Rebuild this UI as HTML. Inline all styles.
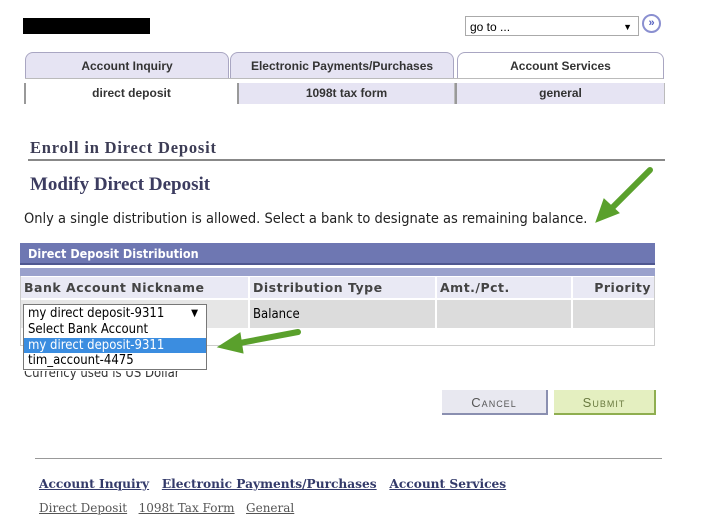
<!DOCTYPE html>
<html><head><style>
body{margin:0;width:720px;height:529px;background:#fff;position:relative;overflow:hidden;font-family:"DejaVu Sans","Liberation Sans",sans-serif}
.a{position:absolute}
.tab{position:absolute;top:52px;height:26px;background:#e6e4f3;border:1px solid #a9a6c2;border-bottom:none;border-radius:8px 8px 0 0;font:bold 12px "Liberation Sans",sans-serif;color:#333;text-align:center;line-height:26px}
.sub{position:absolute;top:83px;height:21px;background:#e6e4f3;border-left:2px solid #999;border-right:1px solid #bbb;font:bold 12px "Liberation Sans",sans-serif;color:#333;text-align:center;line-height:20px}
.th{position:absolute;top:277px;height:21px;background:#e9e9f4;font:bold 12.5px "DejaVu Sans",sans-serif;color:#444;line-height:21px;letter-spacing:.5px}
.td{position:absolute;top:300px;height:28px;background:#dcdcdc}
.btn{position:absolute;top:390px;height:25px;font:13px "Liberation Sans",sans-serif;letter-spacing:1px;text-align:center;line-height:25px;color:#555;font-variant:small-caps}
.ft a{color:#333a6a;text-decoration:underline;font-family:"DejaVu Serif",serif}
</style></head><body>
<div class="a" style="left:23px;top:18px;width:127px;height:16px;background:#000"></div>
<div class="a" style="left:465px;top:16px;width:174px;height:20px;border:1px solid #aaa;font:12px 'Liberation Sans',sans-serif;line-height:20px;padding-left:4px;box-sizing:border-box">go to ...<span style="position:absolute;right:6px;font-size:9px">▼</span></div>
<div class="a" style="left:642px;top:14px;width:19px;height:19px;border:2px solid #8a8fd0;border-radius:50%;box-sizing:border-box;font:bold 11px sans-serif;color:#5560c0;text-align:center;line-height:15px">»</div>
<div class="tab" style="left:25px;width:202px">Account Inquiry</div>
<div class="tab" style="left:230px;width:222px">Electronic Payments/Purchases</div>
<div class="tab" style="left:457px;width:205px;background:#fff">Account Services</div>
<div class="a" style="left:25px;top:78px;width:638px;height:1px;background:#bbb"></div>
<div class="sub" style="left:24px;width:211px;background:#fff">direct deposit</div>
<div class="sub" style="left:237px;width:215px">1098t tax form</div>
<div class="sub" style="left:455px;width:207px">general</div>
<div class="a" style="left:30px;top:138px;font:bold 16.5px 'Liberation Serif',serif;color:#3c3c55;letter-spacing:.8px">Enroll in Direct Deposit</div>
<div class="a" style="left:28px;top:159px;width:637px;height:2px;background:#888"></div>
<div class="a" style="left:30px;top:174px;font:bold 19px 'Liberation Serif',serif;color:#3c3c60">Modify Direct Deposit</div>
<div class="a" style="left:24px;top:211px;font:14.5px 'DejaVu Sans Condensed','DejaVu Sans',sans-serif;color:#222">Only a single distribution is allowed. Select a bank to designate as remaining balance.</div>
<div class="a" style="left:20px;top:243px;width:635px;height:22px;background:#6e77b2;border-bottom:2px solid #4f5790;font:bold 12.5px 'DejaVu Sans Condensed','DejaVu Sans',sans-serif;color:#fff;line-height:22px;padding-left:8px;box-sizing:border-box">Direct Deposit Distribution</div>
<div class="a" style="left:20px;top:268px;width:635px;height:78px;border:1px solid #ccc;box-sizing:border-box"></div>
<div class="a" style="left:20px;top:268px;width:635px;height:8px;background:#9aa1cc"></div>
<div class="th" style="left:21px;width:227px;padding-left:3px;box-sizing:border-box">Bank Account Nickname</div>
<div class="th" style="left:250px;width:185px;padding-left:3px;box-sizing:border-box">Distribution Type</div>
<div class="th" style="left:437px;width:134px;padding-left:3px;box-sizing:border-box">Amt./Pct.</div>
<div class="th" style="left:573px;width:81px;text-align:right;padding-right:3px;box-sizing:border-box">Priority</div>
<div class="td" style="left:21px;width:227px;background:#e6e6e6"></div>
<div class="td" style="left:250px;width:185px;font:13px 'DejaVu Sans Condensed',sans-serif;line-height:30px;padding-left:3px;box-sizing:border-box">Balance</div>
<div class="td" style="left:437px;width:134px"></div>
<div class="td" style="left:573px;width:81px"></div>
<div class="a" style="left:23px;top:304px;width:184px;height:19px;border:1px solid #777;background:#fff;box-sizing:border-box;font:13px 'DejaVu Sans Condensed',sans-serif;line-height:17px;padding-left:4px">my direct deposit-9311<span style="position:absolute;right:8px;font-size:10px">▼</span></div>
<div class="a" style="left:23px;top:322px;width:184px;height:48px;border:1px solid #777;border-top:none;background:#fff;box-sizing:border-box;font:13px 'DejaVu Sans Condensed',sans-serif;line-height:15.5px">
<div style="padding-left:4px">Select Bank Account</div>
<div style="padding-left:4px;background:#3b8de0;color:#fff">my direct deposit-9311</div>
<div style="padding-left:4px">tim_account-4475</div></div>
<div class="a" style="left:24px;top:366px;font:13px 'DejaVu Sans Condensed',sans-serif;color:#333;clip-path:inset(5px 0 0 0)">Currency used is US Dollar</div>
<svg class="a" style="left:0;top:0" width="720" height="529"><g stroke="#5aa02c" fill="#5aa02c" stroke-linecap="round"><path d="M650 170 L612 208" stroke-width="6"/><path d="M596 222 L604 199 L619 213 Z"/><path d="M298 332 L240 343" stroke-width="6"/><path d="M218 347 L240 333 L243 353 Z"/></g></svg>
<div class="btn" style="left:442px;width:106px;background:#e8e8f0;border-right:2px solid #8a8fb0;border-bottom:2px solid #8a8fb0;box-sizing:border-box">Cancel</div>
<div class="btn" style="left:554px;width:102px;background:#e4efc0;border-right:2px solid #8fae50;border-bottom:2px solid #8fae50;box-sizing:border-box;color:#6a7a40">Submit</div>
<div class="a" style="left:35px;top:458px;width:627px;height:1px;background:#999"></div>
<div class="a ft" style="left:39px;top:477px;font-size:12.2px;font-weight:bold"><a>Account Inquiry</a>&nbsp;&nbsp; <a>Electronic Payments/Purchases</a>&nbsp;&nbsp; <a>Account Services</a></div>
<div class="a ft" style="left:39px;top:501px;font-size:12px"><a style="color:#555">Direct Deposit</a>&nbsp;&nbsp; <a style="color:#555">1098t Tax Form</a>&nbsp;&nbsp; <a style="color:#555">General</a></div>
</body></html>
